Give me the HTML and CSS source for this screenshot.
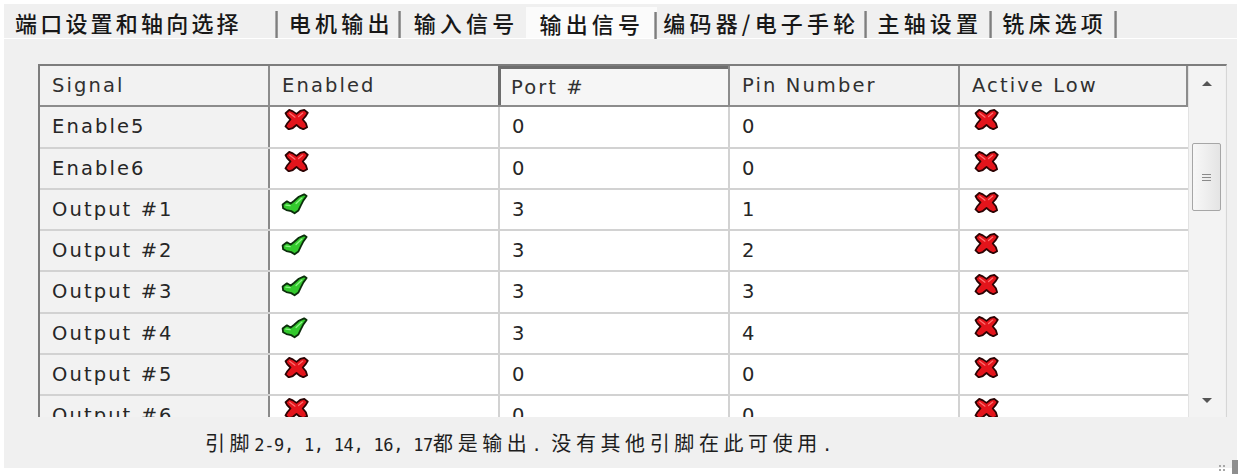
FILE: index.html
```html
<!DOCTYPE html>
<html lang="zh">
<head>
<meta charset="utf-8">
<title>输出信号</title>
<link rel="stylesheet" href="styles.css">
</head>
<body>
<div class="window">
  <div class="tabs">
    <div class="tab sep t1">端口设置和轴向选择</div>
    <div class="tab sep t2">电机输出</div>
    <div class="tab t3">输入信号</div>
    <div class="tab sep active">输出信号</div>
    <div class="tab sep t5">编码器/电子手轮</div>
    <div class="tab sep t6">主轴设置</div>
    <div class="tab sep t7">铣床选项</div>
  </div>

  <div class="frame">
    <div class="grid">
      <div class="row head">
        <div class="cell sig">Signal</div>
        <div class="cell">Enabled</div>
        <div class="cell pressed">Port #</div>
        <div class="cell">Pin Number</div>
        <div class="cell last">Active Low</div>
      </div>
      <div class="row">
        <div class="cell sig">Enable5</div>
        <div class="cell"><svg class="ico-x" viewBox="0 0 24 20"><use href="#x"/></svg></div>
        <div class="cell">0</div><div class="cell">0</div>
        <div class="cell last"><svg class="ico-x" viewBox="0 0 24 20"><use href="#x"/></svg></div>
      </div>
      <div class="row">
        <div class="cell sig">Enable6</div>
        <div class="cell"><svg class="ico-x" viewBox="0 0 24 20"><use href="#x"/></svg></div>
        <div class="cell">0</div><div class="cell">0</div>
        <div class="cell last"><svg class="ico-x" viewBox="0 0 24 20"><use href="#x"/></svg></div>
      </div>
      <div class="row">
        <div class="cell sig">Output #1</div>
        <div class="cell"><svg class="ico-ok" viewBox="0 0 26 20"><use href="#ok"/></svg></div>
        <div class="cell">3</div><div class="cell">1</div>
        <div class="cell last"><svg class="ico-x" viewBox="0 0 24 20"><use href="#x"/></svg></div>
      </div>
      <div class="row">
        <div class="cell sig">Output #2</div>
        <div class="cell"><svg class="ico-ok" viewBox="0 0 26 20"><use href="#ok"/></svg></div>
        <div class="cell">3</div><div class="cell">2</div>
        <div class="cell last"><svg class="ico-x" viewBox="0 0 24 20"><use href="#x"/></svg></div>
      </div>
      <div class="row">
        <div class="cell sig">Output #3</div>
        <div class="cell"><svg class="ico-ok" viewBox="0 0 26 20"><use href="#ok"/></svg></div>
        <div class="cell">3</div><div class="cell">3</div>
        <div class="cell last"><svg class="ico-x" viewBox="0 0 24 20"><use href="#x"/></svg></div>
      </div>
      <div class="row">
        <div class="cell sig">Output #4</div>
        <div class="cell"><svg class="ico-ok" viewBox="0 0 26 20"><use href="#ok"/></svg></div>
        <div class="cell">3</div><div class="cell">4</div>
        <div class="cell last"><svg class="ico-x" viewBox="0 0 24 20"><use href="#x"/></svg></div>
      </div>
      <div class="row">
        <div class="cell sig">Output #5</div>
        <div class="cell"><svg class="ico-x" viewBox="0 0 24 20"><use href="#x"/></svg></div>
        <div class="cell">0</div><div class="cell">0</div>
        <div class="cell last"><svg class="ico-x" viewBox="0 0 24 20"><use href="#x"/></svg></div>
      </div>
      <div class="row">
        <div class="cell sig">Output #6</div>
        <div class="cell"><svg class="ico-x" viewBox="0 0 24 20"><use href="#x"/></svg></div>
        <div class="cell">0</div><div class="cell">0</div>
        <div class="cell last"><svg class="ico-x" viewBox="0 0 24 20"><use href="#x"/></svg></div>
      </div>
    </div>
    <div class="vscroll">
      <div class="arrow up"></div>
      <div class="track">
        <div class="thumb"><span></span><span></span><span></span></div>
      </div>
      <div class="arrow down"></div>
    </div>
  </div>

  <p class="note">引脚<span class="lat">2-9, 1, 14, 16, 17</span>都是输出<span class="lat">. </span>没有其他引脚在此可使用<span class="lat">.</span></p>
</div>
<div class="grip"><b></b><i></i></div>

<svg class="defs" width="0" height="0" aria-hidden="true">
  <defs>
    <g id="x">
      <path d="M1.5 4 L5 0.8 L8.5 2.2 L12 4.6 L15.5 1.8 L19.5 0.8 L22.8 3.5 L21 6.5 L18 10 L21 13.6 L22.2 17.4 L18.6 19.4 L15 17.8 L12 15.3 L8.5 18.2 L4.5 19.4 L1.4 16.6 L3.2 13.6 L6.2 10 L3 6.8 Z" fill="#e3141b" stroke="#2b0303" stroke-width="1.7" stroke-linejoin="round"/>
      <path d="M5.5 4 L10.5 7.8 M18 3.8 L14 7.2" stroke="#ff7070" stroke-width="1.2" fill="none" stroke-linecap="round"/>
    </g>
    <g id="ok">
      <path d="M1.5 10.5 L5.5 7.5 L9 9.5 L12 7.2 L16.5 3.3 L21.5 1 L23.8 2.6 L20.8 6.6 L18.3 11.5 L16.2 16 L12.6 18.6 L9.5 16.6 L5 15.6 L2 14 Z" fill="#33c92d" stroke="#0b2e0b" stroke-width="1.7" stroke-linejoin="round"/>
      <path d="M4.5 11 L8.5 11.5 M14 9.5 L19.5 4.5" stroke="#8ef588" stroke-width="1.2" fill="none" stroke-linecap="round"/>
    </g>
  </defs>
</svg>
</body>
</html>
```

FILE: styles.css
```css
html, body {
  margin: 0;
  padding: 0;
  background: #ffffff;
}

body {
  width: 1240px;
  height: 474px;
  overflow: hidden;
  font-family: "DejaVu Sans", "Noto Sans CJK SC", sans-serif;
}

.window {
  margin: 4px 3px 0 4px;
  width: 1233px;
  height: 464px;
  background: #f0f0f0;
  display: flex;
  flex-direction: column;
}

/* ---------- tabs ---------- */
.tabs {
  display: flex;
  height: 34px;
  border-bottom: 1px solid #ffffff;
  padding-left: 11px;
}

.tab {
  display: flex;
  align-items: center;
  font-family: "Noto Sans CJK SC", sans-serif;
  font-size: 22px;
  font-weight: 500;
  line-height: 22px;
  letter-spacing: 4.2px;
  color: #181818;
  padding-top: 2px;
  white-space: nowrap;
}

.tab.sep::after {
  content: "";
  display: block;
  width: 3px;
  height: 27px;
  margin-top: 5px;
  background: linear-gradient(to right, #c4c4c4, #7a7a7a 45%, #a8a8a8);
}

.t1 { letter-spacing: 3.2px; }
.t1::after { margin-left: 33px; }
.t2 { padding-left: 11px; }
.t2::after { margin-left: 4px; }
.t3 { padding-left: 13px; padding-right: 8px; }
.active {
  background: #fbfbfb;
  padding-left: 13px;
  padding-top: 0;
  margin-top: 3px;
}
.active::after { margin-left: 10px; margin-top: 8px; }
.t5 { padding-left: 6px; }
.t5::after { margin-left: 5px; }
.t6 { padding-left: 10px; }
.t6::after { margin-left: 7px; }
.t7 { padding-left: 10px; }
.t7::after { margin-left: 7px; }

/* ---------- grid ---------- */
.frame {
  margin: 25px 0 0 34px;
  width: 1186px;
  height: 351px;
  border-top: 2px solid #7d7d7d;
  border-left: 2px solid #7d7d7d;
  border-right: 1px solid #d6d6d6;
  display: flex;
  overflow: hidden;
}

.grid {
  width: 1148px;
  height: 351px;
  overflow: hidden;
  background: #ffffff;
}

.row {
  display: flex;
  height: 41.3px;
  box-sizing: border-box;
  border-bottom: 2px solid #d2d2d2;
}

.cell {
  width: 230px;
  box-sizing: border-box;
  border-right: 2px solid #d2d2d2;
  padding-left: 12px;
  font-size: 19.5px;
  letter-spacing: 2.1px;
  line-height: 40px;
  color: #262626;
  white-space: nowrap;
  overflow: hidden;
}

.cell.last {
  width: 228px;
  border-right: 0;
}

.cell.sig {
  background: #f2f2f2;
  border-right-color: #8a8a8a;
}

.head {
  background: #f2f2f2;
  border-bottom-color: #8c8c8c;
}

.head .cell {
  border-right-color: #8c8c8c;
  color: #303030;
}

.head .cell.last {
  border-right: 2px solid #8c8c8c;
}

.head .cell.pressed {
  background: #f6f6f6;
  border-left: 3px solid #6e6e6e;
  box-shadow: inset 0 3px 0 #6e6e6e;
  margin-left: -2px;
  width: 232px;
  line-height: 44px;
  padding-left: 10px;
}

.ico-x {
  display: block;
  width: 25px;
  height: 21px;
  margin: 2px 0 0 2px;
}

.ico-ok {
  display: block;
  width: 28px;
  height: 22px;
  margin: 3px 0 0 -1px;
}

/* ---------- scrollbar ---------- */
.vscroll {
  width: 36px;
  height: 351px;
  background: #f3f3f3;
  border-left: 1px solid #e2e2e2;
  display: flex;
  flex-direction: column;
  align-items: center;
}

.arrow {
  height: 34px;
  width: 100%;
  display: flex;
  align-items: center;
  justify-content: center;
}

.arrow::before {
  content: "";
  width: 0;
  height: 0;
  border-left: 5px solid transparent;
  border-right: 5px solid transparent;
}

.arrow.up::before { border-bottom: 5px solid #555; }
.arrow.down::before { border-top: 5px solid #555; }

.track {
  flex: 1;
  width: 100%;
}

.thumb {
  margin: 43px 0 0 3px;
  width: 29px;
  height: 68px;
  box-sizing: border-box;
  border: 1px solid #a6a6a6;
  border-radius: 2px;
  background: linear-gradient(to right, #f8f8f8, #e4e4e4);
  display: flex;
  flex-direction: column;
  justify-content: center;
  align-items: center;
  gap: 2px;
}

.thumb span {
  display: block;
  width: 9px;
  height: 1px;
  background: #8a8a8a;
}

/* ---------- note ---------- */
.note {
  margin: 15px 0 0 201px;
  font-family: "Noto Sans CJK SC", sans-serif;
  font-size: 20px;
  line-height: 22px;
  letter-spacing: 4.6px;
  color: #1e1e1e;
}

.note .lat {
  font-family: "DejaVu Sans Mono", monospace;
  font-size: 17px;
  letter-spacing: -0.3px;
}

/* ---------- resize grip ---------- */
.grip {
  display: flex;
  justify-content: flex-end;
  align-items: flex-end;
  gap: 6px;
  height: 6px;
  margin-right: 2px;
}

.grip b {
  display: block;
  width: 8px;
  height: 8px;
  margin-bottom: 2px;
  background: radial-gradient(circle, #a8a8a8 0.8px, transparent 1.2px) 0 0 / 4px 4px;
}

.grip i {
  display: block;
  width: 6px;
  height: 14px;
  background: #8e8e8e;
}

.defs {
  position: absolute;
  width: 0;
  height: 0;
}
```
